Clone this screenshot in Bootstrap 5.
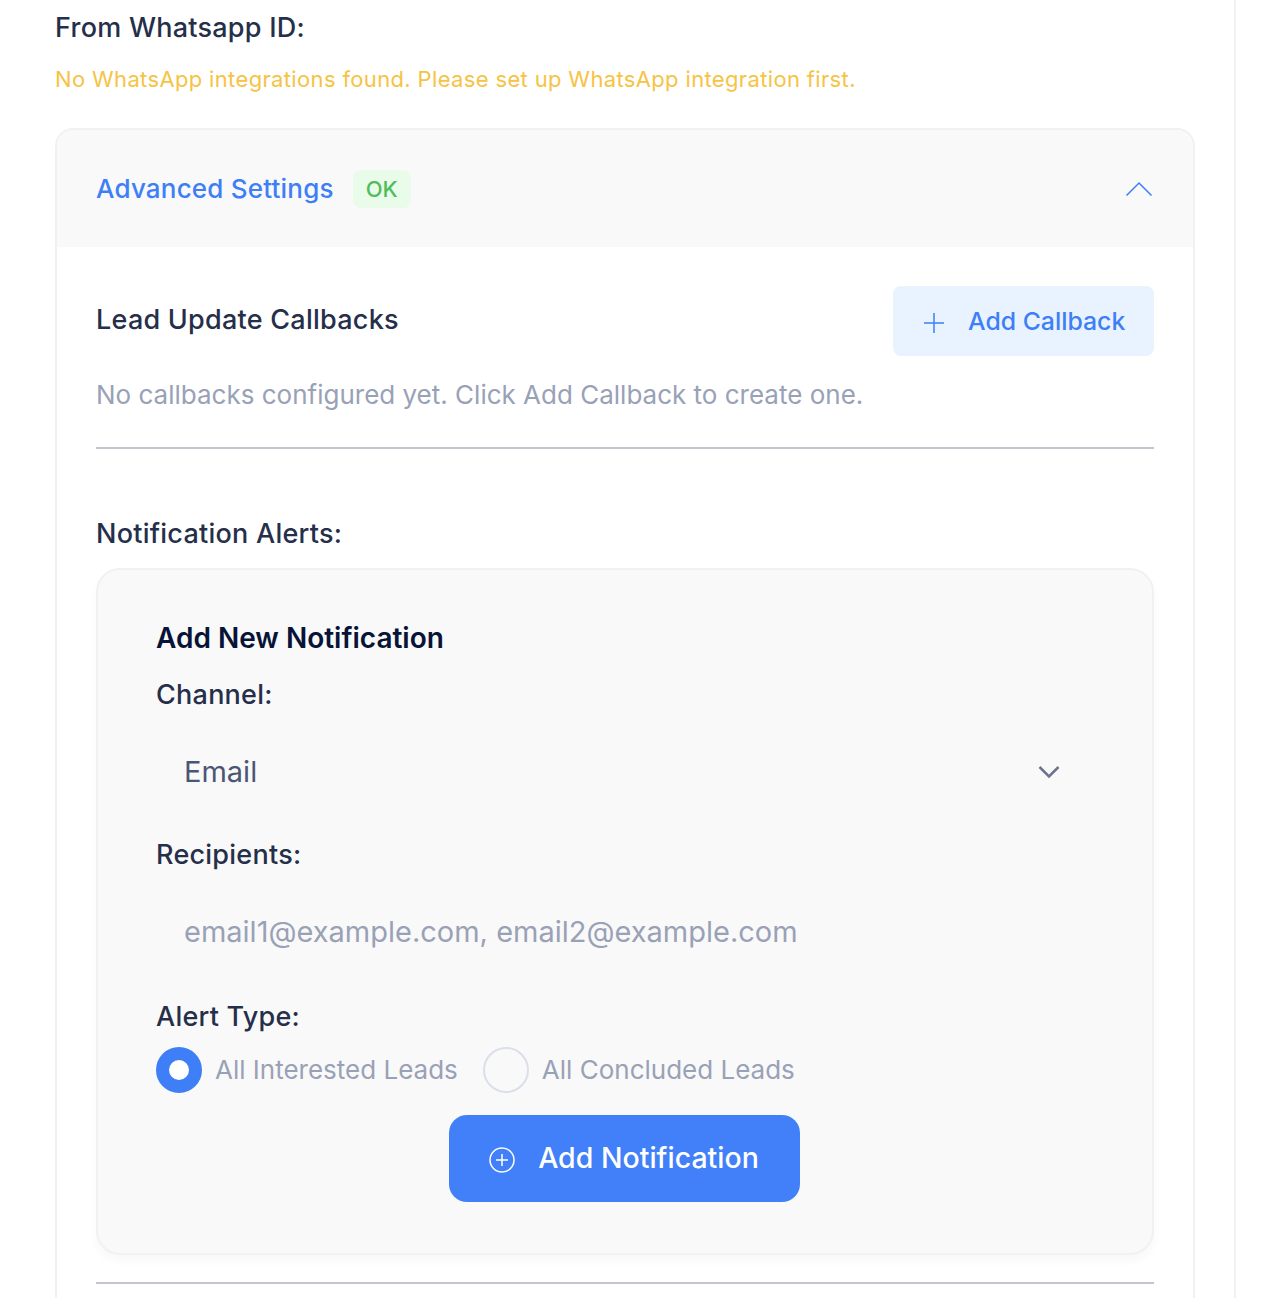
<!DOCTYPE html>
<html lang="en">
<head>
  <meta charset="UTF-8" />
  <meta name="viewport" content="width=device-width, initial-scale=1" />
  <title>Advanced Settings</title>
  <link href="https://cdn.jsdelivr.net/npm/bootstrap@5.3.2/dist/css/bootstrap.min.css" rel="stylesheet">
  <style>
    body {
      font-family: Inter, "Liberation Sans", sans-serif;
      background: #fff;
      color: #252f4a;
      overflow: hidden;
    }
    .page-wrap {
      width: 1236px;
      height: 1298px;
      padding: 8px 39px 0 55px;
      border-right: 2px solid #f1f1f4;
    }
    .field-title {
      font-size: 27px;
      font-weight: 550;
      line-height: 40px;
      letter-spacing: .25px;
      margin: 0;
      color: #252f4a;
    }
    .warn-text {
      font-size: 22px;
      line-height: 32px;
      letter-spacing: .35px;
      color: #f6c344;
      margin: 15px 0 33px;
    }
    .adv-box {
      border: 2px solid #f1f1f4;
      border-bottom: 0;
      border-radius: 18px 18px 0 0;
      height: 1180px;
      overflow: hidden;
    }
    .adv-head {
      height: 117px;
      background: #f9f9f9;
      padding: 0 40px 0 39px;
    }
    .adv-title {
      font-size: 26px;
      font-weight: 550;
      letter-spacing: .2px;
      color: #3e7ff7;
    }
    .ok-tag {
      background: #e9fbe9;
      color: #50bd5c;
      font-size: 22px;
      font-weight: 500;
      line-height: 38px;
      padding: 0 13px;
      border-radius: 8px;
      margin-left: 19px;
    }
    .adv-body {
      padding: 39px 39px 0;
    }
    .callback-title { margin-bottom: 2px; }
    .btn-soft {
      width: 261px;
      height: 70px;
      background: #e9f3ff;
      color: #3e7ff7;
      font-size: 24.8px;
      font-weight: 500;
      border: 0;
      border-radius: 8px;
      padding: 2px 0 0 30px;
    }
    .btn-soft svg { margin-right: 23px; margin-top: 2px; }
    .muted-text {
      font-size: 26px;
      line-height: 36px;
      color: #99a1b7;
      margin: 21px 0 34px;
    }
    .rule-line {
      height: 2px;
      background: #c4c4cf;
      margin: 0;
      border: 0;
      opacity: 1;
    }
    .notif-title { margin-top: 65px; }
    .notif-box {
      margin-top: 14px;
      height: 687px;
      background: #f9f9f9;
      border: 2px solid #f1f1f4;
      border-radius: 24px;
      box-shadow: 0 6px 10px rgba(0, 0, 0, .03);
      padding: 48px 58px 0;
    }
    .new-title {
      font-size: 28px;
      font-weight: 600;
      line-height: 40px;
      color: #071437;
      margin: 0 0 17px;
    }
    .plain-input {
      height: 76px;
      padding: 0 28px;
      font-size: 29px;
      color: #4b5675;
      line-height: 76px;
    }
    .channel-row { margin: 19px 0 25px; }
    .recipients-row { margin: 19px 0 27px; }
    .plain-input svg { margin-right: 6px; }
    .ph-text { color: #99a1b7; }
    .radio-row { margin-top: 10px; }
    .radio-dot {
      width: 46px;
      height: 46px;
      border-radius: 50%;
      border: 2px solid #dbdfe9;
      flex: none;
    }
    .radio-dot.is-on {
      border: 13px solid #3e7ff7;
      background: #fff;
    }
    .radio-label {
      font-size: 26px;
      color: #99a1b7;
      margin: 0 25px 0 13px;
      line-height: 46px;
    }
    .submit-row { margin-top: 22px; padding-right: 2px; }
    .btn-main {
      width: 351px;
      height: 87px;
      background: #4180f8;
      color: #fff;
      font-size: 28.5px;
      font-weight: 500;
      border: 0;
      border-radius: 18px;
    }
    .btn-main svg { margin-right: 23px; margin-top: 3px; }
    .last-rule { margin-top: 27px; }
  </style>
</head>
<body>
  <div class="page-wrap">
    <h6 class="field-title">From Whatsapp ID:</h6>
    <p class="warn-text">No WhatsApp integrations found. Please set up WhatsApp integration first.</p>

    <div class="adv-box">
      <div class="adv-head d-flex align-items-center justify-content-between">
        <div class="d-flex align-items-center">
          <span class="adv-title">Advanced Settings</span>
          <span class="ok-tag">OK</span>
        </div>
        <svg width="28" height="16" viewBox="0 0 28 16" fill="none" stroke="#3e7ff7" stroke-width="1.5"><path d="M1.5 14.5 14 2l12.5 12.5"/></svg>
      </div>

      <div class="adv-body">
        <div class="d-flex align-items-center justify-content-between">
          <h6 class="field-title callback-title">Lead Update Callbacks</h6>
          <button class="btn-soft d-flex align-items-center" type="button">
            <svg width="22" height="22" viewBox="0 0 22 22" fill="none" stroke="#3e7ff7" stroke-width="1.5"><path d="M11 1v20M1 11h20"/></svg>
            Add Callback
          </button>
        </div>
        <p class="muted-text">No callbacks configured yet. Click Add Callback to create one.</p>
        <hr class="rule-line">

        <h6 class="field-title notif-title">Notification Alerts:</h6>
        <div class="notif-box">
          <h5 class="new-title">Add New Notification</h5>

          <h6 class="field-title">Channel:</h6>
          <div class="plain-input channel-row d-flex align-items-center justify-content-between">
            <span>Email</span>
            <svg width="22" height="14" viewBox="0 0 22 14" fill="none" stroke="#6d7490" stroke-width="2.5"><path d="M1.5 2 11 11.5 20.5 2"/></svg>
          </div>

          <h6 class="field-title">Recipients:</h6>
          <div class="plain-input ph-text recipients-row">email1@example.com, email2@example.com</div>

          <h6 class="field-title">Alert Type:</h6>
          <div class="radio-row d-flex align-items-center">
            <span class="radio-dot is-on"></span>
            <span class="radio-label">All Interested Leads</span>
            <span class="radio-dot"></span>
            <span class="radio-label">All Concluded Leads</span>
          </div>

          <div class="submit-row d-flex justify-content-center">
            <button class="btn-main d-flex align-items-center justify-content-center" type="button">
              <svg width="26" height="26" viewBox="0 0 26 26" fill="none" stroke="#fff" stroke-width="1.5"><circle cx="13" cy="13" r="12"/><path d="M13 7v12M7 13h12"/></svg>
              Add Notification
            </button>
          </div>
        </div>
        <hr class="rule-line last-rule">
      </div>
    </div>
  </div>
  <script src="https://cdn.jsdelivr.net/npm/bootstrap@5.3.2/dist/js/bootstrap.bundle.min.js"></script>
</body>
</html>
